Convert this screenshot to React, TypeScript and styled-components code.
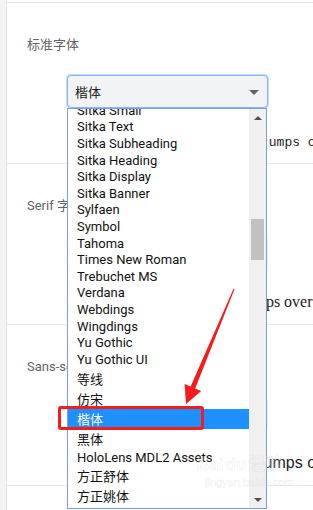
import React from "react";
import styled, { createGlobalStyle } from "styled-components";

const Global = createGlobalStyle`
  html, body {
    margin: 0;
    padding: 0;
    width: 313px;
    height: 510px;
    overflow: hidden;
    background: #ffffff;
  }
  body {
    font-family: Roboto, "Noto Sans CJK SC", sans-serif;
  }
`;

const Page = styled.div`
  position: relative;
  display: flex;
  width: 313px;
  height: 510px;
  overflow: hidden;
`;

const Gutter = styled.div`
  flex: none;
  width: 6px;
  background: #f4f4f4;
`;

const Card = styled.div`
  flex: 1;
  min-width: 0;
  display: flex;
  flex-direction: column;
  background: #ffffff;
  border-left: 1px solid #e2e2e2;
`;

const TopStrip = styled.div`
  flex: none;
  height: 3px;
  box-sizing: border-box;
  border-bottom: 1px solid #e8eaed;
`;

const Section = styled.section`
  flex: none;
  height: 161px;
  box-sizing: border-box;
  padding: 33px 0 0 20px;
  border-bottom: 1px solid #e8eaed;
  display: flex;
  flex-direction: column;
  align-items: flex-start;
`;

const Label = styled.div`
  font-family: Roboto, "Noto Sans CJK SC", sans-serif;
  font-size: 13px;
  line-height: 18px;
  color: #5f6368;
  white-space: nowrap;
`;

const SelectWrap = styled.div`
  position: relative;
  margin: 21px 0 0 40px;
  width: 201px;
  height: 33px;
  flex: none;
`;

const SelectBox = styled.div<{ $focused?: boolean }>`
  width: 100%;
  height: 100%;
  box-sizing: border-box;
  display: flex;
  align-items: center;
  justify-content: space-between;
  padding: 0 8px 0 7px;
  border-radius: 4px;
  background: #f1f3f4;
  border: 1px solid ${(p) => (p.$focused ? "#8ab4f8" : "transparent")};
  box-shadow: ${(p) => (p.$focused ? "0 0 0 1px #c6dafc" : "none")};
  font-size: 13px;
  color: #202124;
`;

const Caret = styled.span`
  width: 0;
  height: 0;
  border-left: 5px solid transparent;
  border-right: 5px solid transparent;
  border-top: 5px solid #5f6368;
  margin-top: 1px;
`;

const Dropdown = styled.div`
  position: absolute;
  left: 0;
  top: 100%;
  width: 200px;
  height: 401px;
  box-sizing: border-box;
  border: 1px solid #7f9ddb;
  background: #ffffff;
  display: flex;
  overflow: hidden;
  z-index: 2;
`;

const OptionList = styled.div`
  flex: 1;
  min-width: 0;
  overflow: hidden;
`;

const OptionScroller = styled.div`
  margin-top: -7px;
`;

const Option = styled.div<{ $h: number; $selected?: boolean }>`
  height: ${(p) => p.$h}px;
  display: flex;
  align-items: center;
  padding-left: 9px;
  font-family: Roboto, "Noto Sans CJK SC", sans-serif;
  font-size: 13px;
  white-space: nowrap;
  color: ${(p) => (p.$selected ? "#ffffff" : "#111111")};
  background: ${(p) => (p.$selected ? "#1e90ff" : "transparent")};
`;

const ScrollBar = styled.div`
  flex: none;
  width: 17px;
  background: #f0f0f0;
  display: flex;
  flex-direction: column;
`;

const ScrollButton = styled.div`
  flex: none;
  height: 17px;
  display: flex;
  align-items: center;
  justify-content: center;
`;

const ArrowUp = styled.span`
  width: 0;
  height: 0;
  border-left: 4px solid transparent;
  border-right: 4px solid transparent;
  border-bottom: 4px solid #505050;
`;

const ArrowDown = styled.span`
  width: 0;
  height: 0;
  border-left: 4px solid transparent;
  border-right: 4px solid transparent;
  border-top: 4px solid #505050;
`;

const Thumb = styled.div`
  flex: none;
  margin: 0 2px;
  height: 41px;
  background: #c1c1c1;
`;

const TrackFill = styled.div`
  flex: 1;
`;

const Preview = styled.div<{ $font: string; $size: number; $indent: number; $drop?: number }>`
  margin-top: ${(p) => 23 + (p.$drop ?? 0)}px;
  padding-left: ${(p) => p.$indent}px;
  height: 20px;
  line-height: 20px;
  white-space: nowrap;
  font-family: ${(p) => p.$font};
  font-size: ${(p) => p.$size}px;
  color: #202124;
`;

const RedBox = styled.div`
  position: absolute;
  left: 58px;
  top: 406px;
  width: 146px;
  height: 24px;
  box-sizing: border-box;
  border: 3px solid #f51c1c;
  border-radius: 3px;
  z-index: 3;
`;

const ArrowLayer = styled.svg`
  position: absolute;
  left: 0;
  top: 0;
  width: 313px;
  height: 510px;
  pointer-events: none;
  z-index: 3;
`;

const Watermark = styled.div`
  position: absolute;
  left: 197px;
  top: 455px;
  z-index: 3;
  display: flex;
  flex-direction: column;
  align-items: flex-start;
  opacity: 0.3;
  pointer-events: none;
`;

const WatermarkTop = styled.div`
  display: flex;
  align-items: center;
  gap: 2px;
  font-family: "Liberation Sans", "Noto Sans CJK SC", sans-serif;
  font-weight: bold;
  font-size: 17px;
  line-height: 20px;
  color: rgba(255, 255, 255, 0.7);
  -webkit-text-stroke: 0.7px #d0d0d0;
`;

const WatermarkUrl = styled.div`
  margin-left: 8px;
  font-family: "Liberation Sans", sans-serif;
  font-size: 11px;
  line-height: 14px;
  color: rgba(255, 255, 255, 0.7);
  -webkit-text-stroke: 0.5px #d4d4d4;
`;

type Item = { name: string; h: number; selected?: boolean };

const LATIN = 16.6;
const CJK = 20;

const items: Item[] = [
  { name: "Sitka Small", h: LATIN },
  { name: "Sitka Text", h: LATIN },
  { name: "Sitka Subheading", h: LATIN },
  { name: "Sitka Heading", h: LATIN },
  { name: "Sitka Display", h: LATIN },
  { name: "Sitka Banner", h: LATIN },
  { name: "Sylfaen", h: LATIN },
  { name: "Symbol", h: LATIN },
  { name: "Tahoma", h: LATIN },
  { name: "Times New Roman", h: LATIN },
  { name: "Trebuchet MS", h: LATIN },
  { name: "Verdana", h: LATIN },
  { name: "Webdings", h: LATIN },
  { name: "Wingdings", h: LATIN },
  { name: "Yu Gothic", h: LATIN },
  { name: "Yu Gothic UI", h: LATIN },
  { name: "等线", h: 21.4 },
  { name: "仿宋", h: CJK },
  { name: "楷体", h: CJK, selected: true },
  { name: "黑体", h: CJK },
  { name: "HoloLens MDL2 Assets", h: LATIN },
  { name: "方正舒体", h: CJK },
  { name: "方正姚体", h: CJK },
  { name: "华文彩云", h: CJK },
];

const SAMPLE = "jumps over the lazy dog";

export default function App() {
  return (
    <>
      <Global />
      <Page>
        <Gutter />
        <Card>
          <TopStrip />
          <Section>
            <Label>标准字体</Label>
            <SelectWrap>
              <SelectBox $focused>
                <span>楷体</span>
                <Caret />
              </SelectBox>
              <Dropdown>
                <OptionList>
                  <OptionScroller>
                    {items.map((it) => (
                      <Option key={it.name} $h={it.h} $selected={it.selected}>
                        {it.name}
                      </Option>
                    ))}
                  </OptionScroller>
                </OptionList>
                <ScrollBar>
                  <ScrollButton>
                    <ArrowUp />
                  </ScrollButton>
                  <Thumb style={{ marginTop: 93 }} />
                  <TrackFill />
                  <ScrollButton>
                    <ArrowDown />
                  </ScrollButton>
                </ScrollBar>
              </Dropdown>
            </SelectWrap>
            <Preview $font={'"Liberation Mono", monospace'} $size={13} $indent={234} $drop={2}>
              {SAMPLE}
            </Preview>
          </Section>
          <Section>
            <Label>Serif 字体</Label>
            <SelectWrap>
              <SelectBox>
                <span>宋体</span>
                <Caret />
              </SelectBox>
            </SelectWrap>
            <Preview $font={'"Liberation Serif", serif'} $size={16} $indent={214}>
              {SAMPLE}
            </Preview>
          </Section>
          <Section>
            <Label>Sans-serif 字体</Label>
            <SelectWrap>
              <SelectBox>
                <span>微软雅黑</span>
                <Caret />
              </SelectBox>
            </SelectWrap>
            <Preview $font={'"Liberation Sans", sans-serif'} $size={16} $indent={233}>
              {SAMPLE}
            </Preview>
          </Section>
        </Card>
        <RedBox />
        <ArrowLayer viewBox="0 0 313 510">
          <polygon
            points="234.6,289 233.6,288.6 190.6,386.4 184.6,383.9 186,404 201.2,390.9 195.2,388.4"
            fill="#f51c1c"
          />
        </ArrowLayer>
        <Watermark>
          <WatermarkTop>
            <span>Bai</span>
            <span>du</span>
            <span>经验</span>
          </WatermarkTop>
          <WatermarkUrl>jingyan.baidu.com</WatermarkUrl>
        </Watermark>
      </Page>
    </>
  );
}
